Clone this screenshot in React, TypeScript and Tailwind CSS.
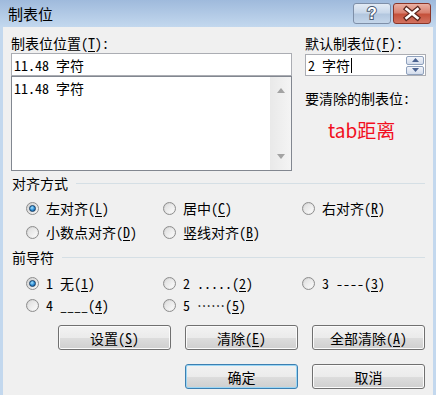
import React from "react";

// SimSun-like look: half-width ASCII, full-width CJK
const body = "[font-family:'Noto_Sans_Mono_CJK_SC','Liberation_Mono','Noto_Sans_CJK_SC',monospace]";

const Radio = ({ checked = false }: { checked?: boolean }) => (
  <span className="flex h-[13px] w-[13px] shrink-0 items-center justify-center rounded-full border border-[#8d8d8d] bg-[linear-gradient(135deg,#d0d0d0,#f8f8f8)]">
    {checked ? (
      <span className="h-[7px] w-[7px] rounded-full border border-[#173f66] bg-[radial-gradient(circle_at_40%_35%,#a6e4ff,#2a8ad4_55%,#0e4a86)]" />
    ) : (
      <span className="h-[9px] w-[9px] rounded-full bg-[linear-gradient(135deg,#dedede,#fbfbfb)]" />
    )}
  </span>
);

const Option = ({ label, k, checked }: { label: React.ReactNode; k: string; checked?: boolean }) => (
  <div className="flex h-[22px] items-center gap-[7px]">
    <Radio checked={checked} />
    <span className="whitespace-pre leading-[16px]">
      {label}(<u className="underline-offset-2">{k}</u>)
    </span>
  </div>
);

const GroupHeader = ({ title }: { title: string }) => (
  <div className="flex items-center pl-[9px] pr-[8px]">
    <span className="leading-[16px]">{title}</span>
    <div className="ml-[8px] h-px flex-1 bg-[#d5dfe5]" />
  </div>
);

const Btn = ({ children, primary }: { children: React.ReactNode; primary?: boolean }) => (
  <button
    type="button"
    className={`flex h-[25px] w-[113px] items-center justify-center rounded-[3px] border bg-[linear-gradient(#f2f2f2_0%,#ebebeb_50%,#dddddd_51%,#cfcfcf_100%)] leading-[16px] ${
      primary
        ? "border-[#3c7fb1] shadow-[inset_0_0_0_1px_#9ad6f5]"
        : "border-[#707070] shadow-[inset_0_0_0_1px_#fbfbfb]"
    }`}
  >
    {children}
  </button>
);

export default function App() {
  return (
    <div className={`flex h-[395px] w-[436px] flex-col bg-[linear-gradient(#9fbadc,#c3d8ee_27px,#c3d8ee)] px-[3px] text-[14px] text-black ${body}`}>
      {/* title bar */}
      <div className="flex h-[27px] shrink-0 items-start pl-[5px] pr-[2px]">
        <span className="mt-[4px] text-[15px] leading-[20px] [font-family:'Noto_Sans_CJK_SC',sans-serif]">制表位</span>
        <div className="ml-auto mt-[3px] flex gap-[2px]">
          <div className="h-[21px] w-[38px] rounded-[3px] border border-[#7e8fa8] bg-[linear-gradient(#e3ebf5,#c9d8ea_45%,#b3c7df_55%,#c4d6ea)]">
            <svg width="36" height="19" viewBox="0 0 36 19">
              <text x="18" y="15" textAnchor="middle" fontSize="16" fontWeight="bold" fontFamily="Liberation Sans, sans-serif" fill="#fff" stroke="#4a5a72" strokeWidth="2" paintOrder="stroke">?</text>
            </svg>
          </div>
          <div className="h-[21px] w-[38px] rounded-[3px] border border-[#8a3528] bg-[linear-gradient(#eab0a3,#d98170_45%,#c5513b_55%,#d27260)]">
            <svg width="36" height="19" viewBox="0 0 36 19">
              <path d="M12.5 5 L23.5 14 M23.5 5 L12.5 14" stroke="#5b241b" strokeWidth="5" strokeLinecap="square" />
              <path d="M12.5 5 L23.5 14 M23.5 5 L12.5 14" stroke="#fff" strokeWidth="2.6" strokeLinecap="square" />
            </svg>
          </div>
        </div>
      </div>

      {/* client area */}
      <div className="flex flex-1 flex-col bg-[#f0f0f0] pt-[8px]">
        <div className="flex gap-[13px] pl-[8px]">
          <div className="w-[281px]">
            <div className="h-[16px] leading-[16px]">
              制表位位置(<u className="underline-offset-2">T</u>):
            </div>
            <div className="mt-[2px] flex h-[23px] items-center border border-[#abadb3] bg-white pl-[2px] leading-[16px]">
              11.48 字符
            </div>
            <div className="flex h-[95px] border border-[#828790] bg-white">
              <div className="flex-1 pl-[2px] pt-[3px] leading-[16px]">11.48 字符</div>
              <div className="flex w-[21px] flex-col items-center justify-between bg-[linear-gradient(90deg,#e9e9e9,#f4f4f4)] py-[11px]">
                <svg width="8" height="5" viewBox="0 0 8 5"><path d="M0 5 L4 0 L8 5 Z" fill="#a3a3a3" /></svg>
                <svg width="8" height="5" viewBox="0 0 8 5"><path d="M0 0 L4 5 L8 0 Z" fill="#a3a3a3" /></svg>
              </div>
            </div>
          </div>

          <div className="w-[121px]">
            <div className="h-[16px] leading-[16px]">
              默认制表位(<u className="underline-offset-2">F</u>):
            </div>
            <div className="mt-[3px] flex h-[22px] items-center border border-[#abadb3] bg-white pl-[2px]">
              <span className="leading-[16px]">2 字符</span>
              <span className="ml-[1px] h-[15px] w-px bg-black" />
              <div className="ml-auto mr-[1px] flex flex-col gap-px">
                <div className="flex h-[9px] w-[18px] items-center justify-center rounded-[2px] border border-[#8fa1bc] bg-[linear-gradient(#f2f5fb,#d3dcec)]">
                  <svg width="7" height="4" viewBox="0 0 7 4"><path d="M0 4 L3.5 0 L7 4 Z" fill="#4a6290" /></svg>
                </div>
                <div className="flex h-[9px] w-[18px] items-center justify-center rounded-[2px] border border-[#8fa1bc] bg-[linear-gradient(#f2f5fb,#d3dcec)]">
                  <svg width="7" height="4" viewBox="0 0 7 4"><path d="M0 0 L3.5 4 L7 0 Z" fill="#4a6290" /></svg>
                </div>
              </div>
            </div>
            <div className="mt-[14px] h-[16px] leading-[16px]">要清除的制表位:</div>
            <div className="mt-[12px] pl-[23px] text-[19px] leading-[24px] text-[#f20f1e] [font-family:'Noto_Sans_CJK_SC',sans-serif]">
              tab距离
            </div>
          </div>
        </div>

        <div className="mt-[4px]">
          <GroupHeader title="对齐方式" />
        </div>
        <div className="mt-[6px] grid grid-cols-[137px_139px_1fr] gap-y-[2px] pl-[23px]">
          <Option label="左对齐" k="L" checked />
          <Option label="居中" k="C" />
          <Option label="右对齐" k="R" />
          <Option label="小数点对齐" k="D" />
          <Option label="竖线对齐" k="B" />
        </div>

        <div className="mt-[6px]">
          <GroupHeader title="前导符" />
        </div>
        <div className="mt-[7px] grid grid-cols-[137px_139px_1fr] pl-[23px]">
          <Option label="1 无" k="1" checked />
          <Option label="2 ....." k="2" />
          <Option label="3 ----" k="3" />
          <Option label="4 ____" k="4" />
          <Option
            label={
              <>
                5 <span className="[font-family:'Noto_Sans_CJK_SC',sans-serif]">⋯⋯</span>
              </>
            }
            k="5"
          />
        </div>

        <div className="mt-[9px] flex justify-end gap-[14px] pr-[8px]">
          <Btn>设置(<u className="underline-offset-2">S</u>)</Btn>
          <Btn>清除(<u className="underline-offset-2">E</u>)</Btn>
          <Btn>全部清除(<u className="underline-offset-2">A</u>)</Btn>
        </div>
        <div className="mt-[14px] flex justify-end gap-[14px] pr-[8px]">
          <Btn primary>确定</Btn>
          <Btn>取消</Btn>
        </div>
      </div>
    </div>
  );
}
